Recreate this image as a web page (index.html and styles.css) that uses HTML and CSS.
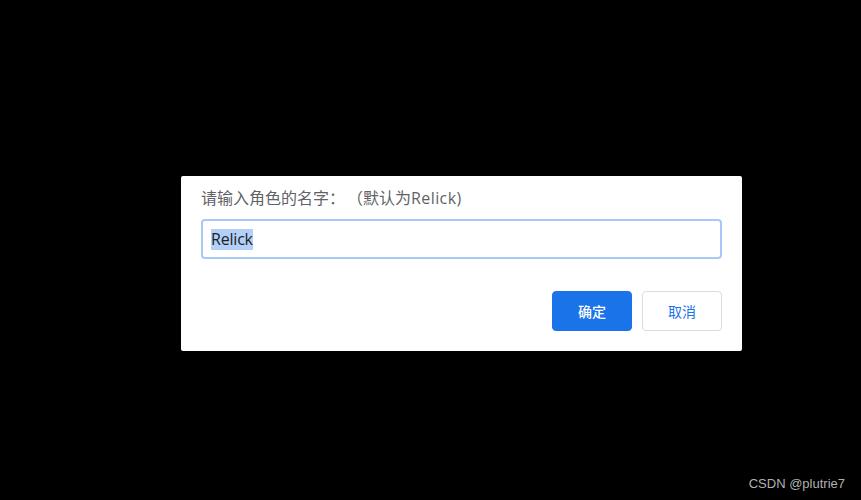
FILE: index.html
```html
<!DOCTYPE html>
<html>
<head>
<meta charset="utf-8">
<link rel="stylesheet" href="styles.css">
</head>
<body>
<div class="page">
  <div class="dialog">
    <div class="label">请输入角色的名字<span class="colon">：</span>（默认为<span class="latin">Relick)</span></div>
    <div class="input"><span class="sel">Relick</span></div>
    <div class="actions">
      <button class="btn primary">确定</button>
      <button class="btn secondary">取消</button>
    </div>
  </div>
  <div class="watermark">CSDN @plutrie7</div>
</div>
</body>
</html>
```
FILE: styles.css
```css
html, body {
  margin: 0;
  padding: 0;
  background: #000;
}
.page {
  width: 861px;
  height: 500px;
  display: flex;
  flex-direction: column;
  font-family: "Noto Sans CJK SC", "Noto Sans", sans-serif;
}
.dialog {
  margin: 176px 0 0 181px;
  width: 561px;
  box-sizing: border-box;
  background: #fff;
  border-radius: 2px;
  padding: 10px 20px 20px 20px;
}
.label {
  font-size: 16px;
  line-height: 22px;
  color: #5f6368;
  height: 22px;
  text-spacing-trim: space-all;
}
.colon {
  margin-right: 2px;
}
.latin {
  font-family: "Open Sans", "Noto Sans", sans-serif;
  font-size: 16px;
  letter-spacing: 0.4px;
}
.input {
  margin-top: 11px;
  height: 40px;
  box-sizing: border-box;
  border: 2px solid #a8c7fa;
  border-radius: 4px;
  padding: 0 8px;
  display: flex;
  align-items: center;
  font-family: "Open Sans", "Noto Sans", sans-serif;
  font-size: 16px;
  color: #202124;
}
.sel {
  background: #b3d1f8;
  line-height: 21px;
  letter-spacing: -0.2px;
}
.actions {
  margin-top: 32px;
  display: flex;
  justify-content: flex-end;
  gap: 10px;
}
.btn {
  width: 80px;
  height: 40px;
  box-sizing: border-box;
  border-radius: 4px;
  font-family: "Noto Sans CJK SC", sans-serif;
  font-size: 14px;
  padding: 0;
}
.primary {
  background: #1a73e8;
  border: 1px solid #1a73e8;
  color: #fff;
  font-weight: 500;
}
.secondary {
  background: #fff;
  border: 1px solid #dadce0;
  color: #1a73e8;
}
.watermark {
  margin-top: auto;
  align-self: flex-end;
  margin-right: 16px;
  margin-bottom: 9px;
  font-family: "Liberation Sans", Arial, sans-serif;
  font-size: 13px;
  color: #b0b0b0;
}
```
